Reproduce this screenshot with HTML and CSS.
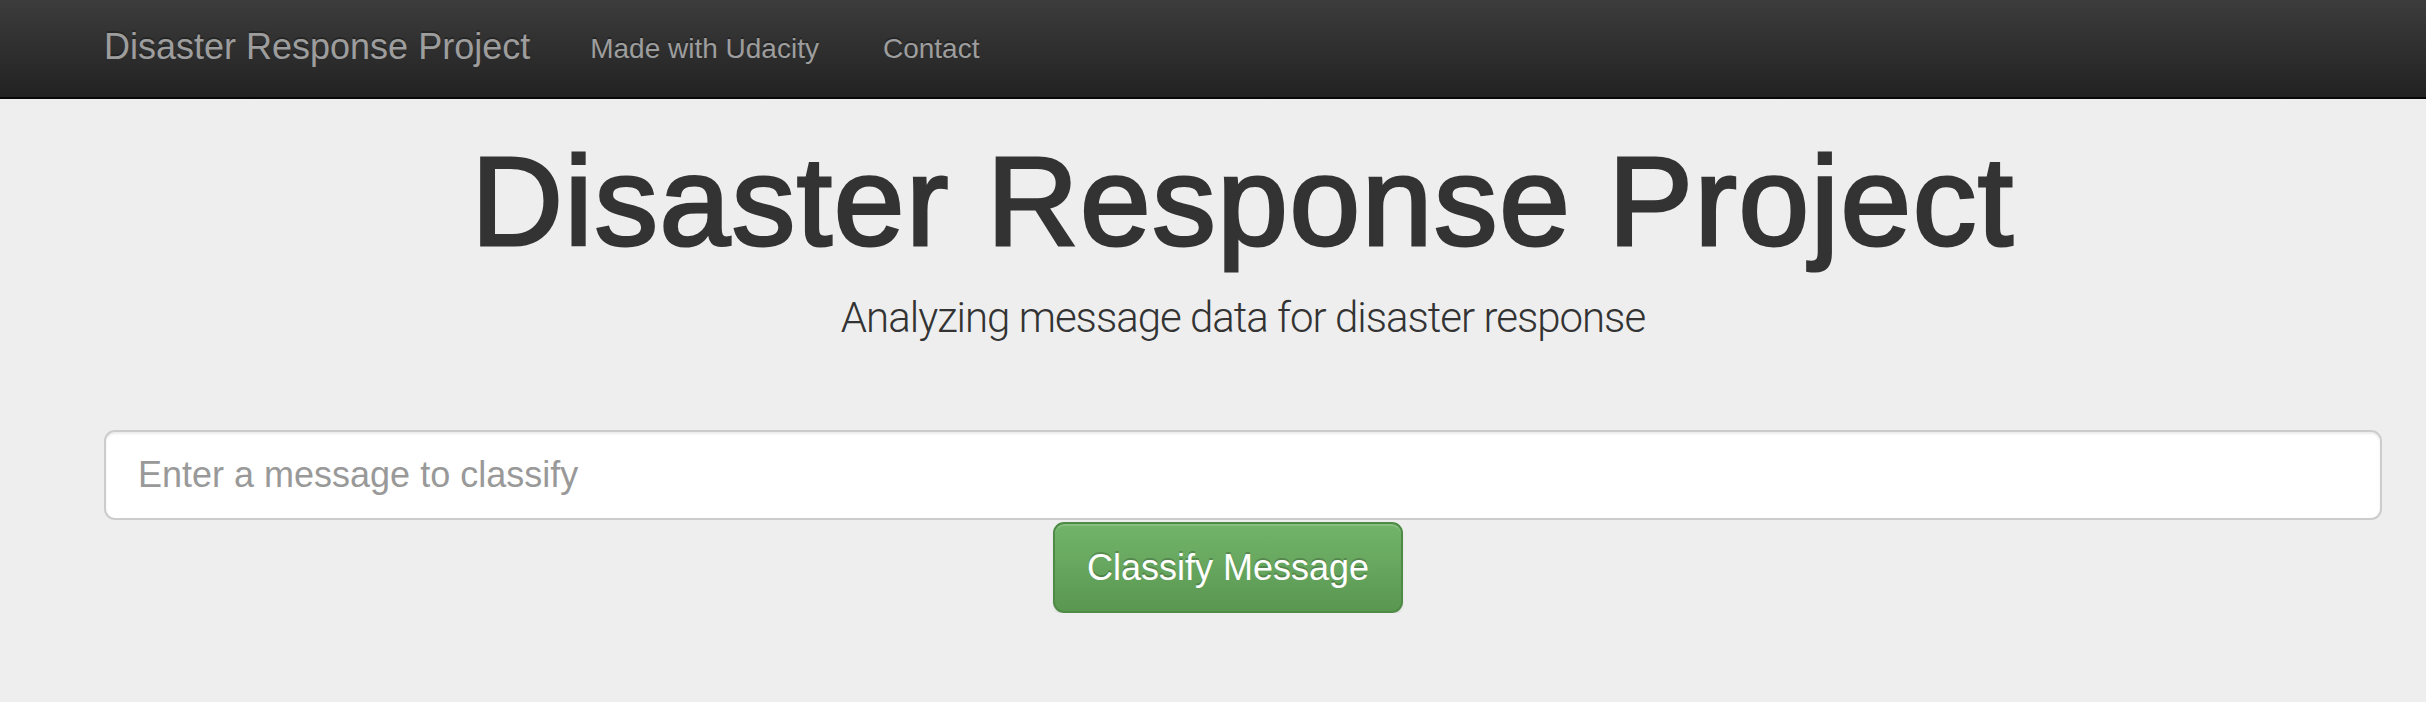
FILE: index.html
```html
<!DOCTYPE html>
<html lang="en">
<head>
<meta charset="utf-8">
<title>Disaster Response Project</title>
<link rel="stylesheet" href="styles.css">
</head>
<body>
<nav class="navbar">
  <div class="navbar-inner">
    <a class="brand" href="#">Disaster Response Project</a>
    <ul class="nav">
      <li><a href="#">Made with Udacity</a></li>
      <li><a href="#">Contact</a></li>
    </ul>
  </div>
</nav>
<main class="jumbotron">
  <h1 class="title">Disaster Response Project</h1>
  <p class="lead">Analyzing message data for disaster response</p>
  <form class="classify-form">
    <input class="message-input" type="text" name="query" placeholder="Enter a message to classify">
    <div class="actions">
      <button type="button" class="btn-success">Classify Message</button>
    </div>
  </form>
</main>
</body>
</html>
```

FILE: styles.css
```css
html, body {
  margin: 0;
  padding: 0;
}
body {
  background: #eeeeee;
  font-family: "Liberation Sans", Arial, Helvetica, sans-serif;
  color: #333333;
}
.navbar {
  height: 97px;
  background: linear-gradient(to bottom, #3c3c3c 0%, #222222 100%);
  border-bottom: 2px solid #080808;
}
.navbar-inner {
  height: 100%;
  display: flex;
  align-items: center;
  padding-left: 104px;
}
.brand {
  font-size: 36px;
  color: #9d9d9d;
  text-decoration: none;
  text-shadow: 0 -2px 0 rgba(0, 0, 0, 0.25);
  margin-right: 60px;
  margin-bottom: 4px;
  white-space: nowrap;
}
.nav {
  list-style: none;
  margin: 0;
  padding: 0;
  display: flex;
  gap: 64px;
}
.nav a {
  font-size: 28px;
  color: #9d9d9d;
  text-decoration: none;
  text-shadow: 0 -2px 0 rgba(0, 0, 0, 0.25);
  white-space: nowrap;
}
.jumbotron {
  padding: 0 44px 0 104px;
}
.title {
  margin: 33px 0 0;
  font-size: 127px;
  line-height: 1.1;
  font-weight: 400;
  -webkit-text-stroke: 3px #333333;
  letter-spacing: 1.6px;
  text-align: center;
  color: #333333;
  white-space: nowrap;
}
.lead {
  margin: 17px 0 0;
  font-family: Roboto, "Liberation Sans", sans-serif;
  font-weight: 300;
  font-size: 42px;
  line-height: 1.4;
  letter-spacing: -1px;
  text-align: center;
  color: #333333;
}
.classify-form {
  margin-top: 83px;
}
.message-input {
  display: block;
  box-sizing: border-box;
  width: 100%;
  height: 90px;
  padding: 0 32px;
  font-family: "Liberation Sans", Arial, sans-serif;
  font-size: 36px;
  color: #555555;
  background: #ffffff;
  border: 2px solid #cccccc;
  border-radius: 11px;
  box-shadow: inset 0 2px 2px rgba(0, 0, 0, 0.075);
  outline: none;
}
.message-input::placeholder {
  color: #999999;
}
.actions {
  margin-top: 2px;
  padding-left: 949px;
}
.btn-success {
  display: flex;
  align-items: center;
  justify-content: center;
  box-sizing: border-box;
  width: 350px;
  height: 91px;
  padding: 0;
  white-space: nowrap;
  font-family: "Liberation Sans", Arial, sans-serif;
  font-size: 36px;
  color: #ffffff;
  background: linear-gradient(to bottom, #72b46a 0%, #5a9751 100%);
  border: 2px solid #4f8a47;
  border-radius: 11px;
  text-shadow: 0 -2px 0 rgba(0, 0, 0, 0.2);
  box-shadow: inset 0 2px 0 rgba(255, 255, 255, 0.15), 0 2px 2px rgba(0, 0, 0, 0.075);
  cursor: pointer;
}
```
